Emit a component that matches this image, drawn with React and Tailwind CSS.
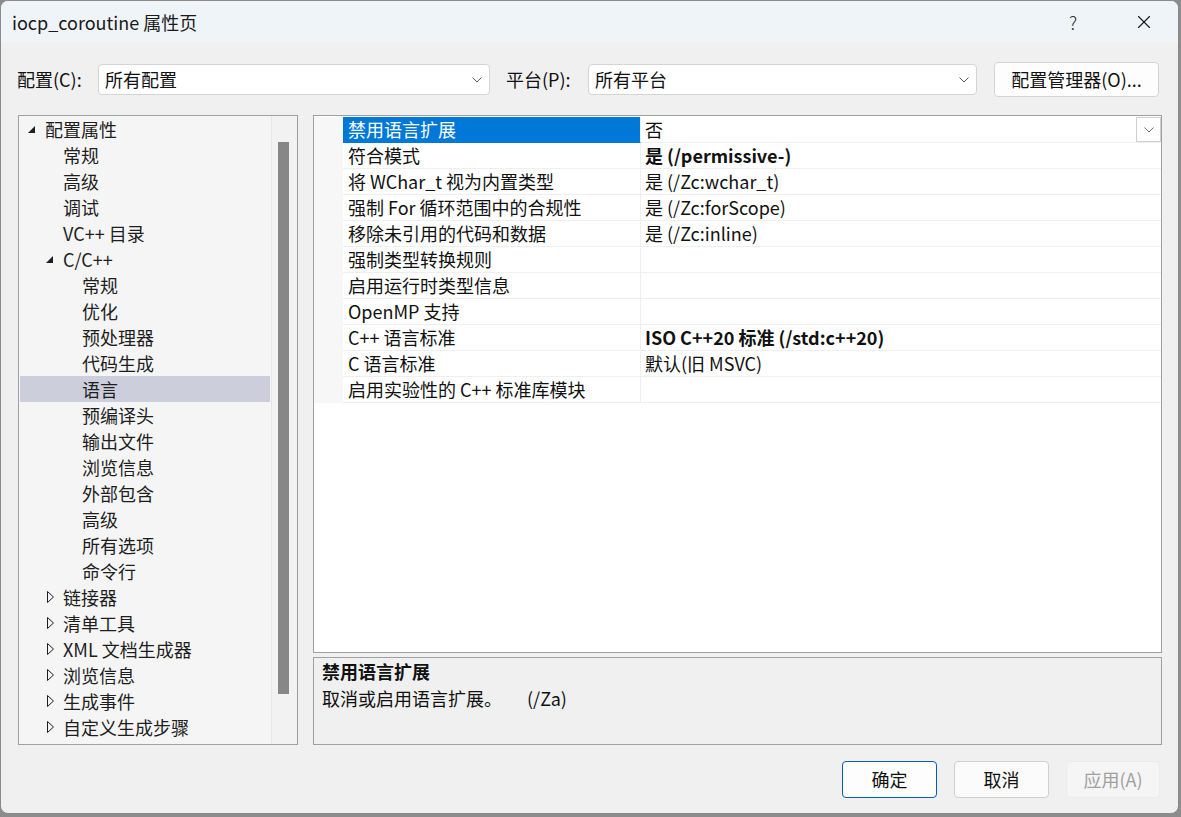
import { X } from 'lucide-react'

const tree = [
  { l: 0, t: '配置属性', e: 'open' },
  { l: 1, t: '常规' },
  { l: 1, t: '高级' },
  { l: 1, t: '调试' },
  { l: 1, t: 'VC++ 目录' },
  { l: 1, t: 'C/C++', e: 'open' },
  { l: 2, t: '常规' },
  { l: 2, t: '优化' },
  { l: 2, t: '预处理器' },
  { l: 2, t: '代码生成' },
  { l: 2, t: '语言', sel: true },
  { l: 2, t: '预编译头' },
  { l: 2, t: '输出文件' },
  { l: 2, t: '浏览信息' },
  { l: 2, t: '外部包含' },
  { l: 2, t: '高级' },
  { l: 2, t: '所有选项' },
  { l: 2, t: '命令行' },
  { l: 1, t: '链接器', e: 'closed' },
  { l: 1, t: '清单工具', e: 'closed' },
  { l: 1, t: 'XML 文档生成器', e: 'closed' },
  { l: 1, t: '浏览信息', e: 'closed' },
  { l: 1, t: '生成事件', e: 'closed' },
  { l: 1, t: '自定义生成步骤', e: 'closed' },
]

const indent = ['pl-[7px]', 'pl-[25px]', 'pl-[44px]']

const props = [
  { n: '禁用语言扩展', v: '否', sel: true },
  { n: '符合模式', v: '是 (/permissive-)', bold: true },
  { n: '将 WChar_t 视为内置类型', v: '是 (/Zc:wchar_t)' },
  { n: '强制 For 循环范围中的合规性', v: '是 (/Zc:forScope)' },
  { n: '移除未引用的代码和数据', v: '是 (/Zc:inline)' },
  { n: '强制类型转换规则', v: '' },
  { n: '启用运行时类型信息', v: '' },
  { n: 'OpenMP 支持', v: '' },
  { n: 'C++ 语言标准', v: 'ISO C++20 标准 (/std:c++20)', bold: true },
  { n: 'C 语言标准', v: '默认(旧 MSVC)' },
  { n: '启用实验性的 C++ 标准库模块', v: '' },
]

const Chevron = ({ color = '#606060' }) => (
  <svg width="10" height="6" viewBox="0 0 10 6">
    <polyline points="0.5,0.5 5,5 9.5,0.5" fill="none" stroke={color} strokeWidth="1" />
  </svg>
)

const Combo = ({ text, w }) => (
  <div className={`${w} h-[31px] flex items-center bg-white border border-[#d4d4d4] rounded-[4px] pl-[6px] pr-[7px]`}>
    <span className="flex-1">{text}</span>
    <Chevron />
  </div>
)

const TreeGlyph = ({ e }) => {
  if (e === 'open')
    return (
      <svg width="8" height="8" viewBox="0 0 8 8" className="ml-[1px] mt-[2px]">
        <polygon points="7,0 7,7 0,7" fill="#1e1e1e" />
      </svg>
    )
  if (e === 'closed')
    return (
      <svg width="8" height="12" viewBox="0 0 8 12" className="ml-[2px]">
        <polygon points="0.5,0.5 6.5,6 0.5,11.5" fill="none" stroke="#1e1e1e" strokeWidth="1" />
      </svg>
    )
  return null
}

export default function App() {
  return (
    <div className="w-[1181px] h-[817px] bg-[#8c8c8c] overflow-hidden font-['Noto_Sans_CJK_SC',sans-serif] text-[18px] text-[#111]">
      <div className="w-[1179px] h-[814px] rounded-[8px] border border-[#8a8a8a] bg-[#f0f0f0] flex flex-col overflow-hidden">
        {/* title bar */}
        <div className="h-[42px] bg-[#eff4f9] flex items-center pl-[11px] pr-[11px]">
          <span className="text-[18px] text-[#1a1a1a]">iocp_coroutine 属性页</span>
          <div className="ml-auto flex items-center gap-[25px]">
            <span className="w-[46px] text-center text-[18px] font-light text-[#333]">?</span>
            <span className="w-[46px] flex justify-center">
              <X size={22} strokeWidth={1.2} color="#1a1a1a" />
            </span>
          </div>
        </div>

        {/* config row */}
        <div className="mt-[19px] h-[35px] flex items-center pl-[16px]">
          <span className="w-[81px]">配置(C):</span>
          <Combo text="所有配置" w="w-[392px]" />
          <span className="w-[82px] ml-[16px]">平台(P):</span>
          <Combo text="所有平台" w="w-[389px]" />
          <button className="ml-[17px] w-[165px] h-[35px] bg-[#fdfdfd] border border-[#d4d4d4] rounded-[4px] text-[#111]">
            配置管理器(O)...
          </button>
        </div>

        {/* main */}
        <div className="mt-[18px] flex pl-[17px] gap-[15px]">
          {/* tree */}
          <div className="w-[280px] h-[630px] border border-[#a0a0a0] bg-[#f5f5f5] flex">
            <div className="flex-1">
              {tree.map((it, i) => (
                <div
                  key={i}
                  className={`h-[26px] leading-[26px] flex items-center mx-[1px] text-[#1e1e1e] ${indent[it.l]} ${it.sel ? 'bg-[#cccedb]' : ''}`}
                >
                  <span className="w-[18px] flex items-center">
                    <TreeGlyph e={it.e} />
                  </span>
                  <span className="whitespace-nowrap">{it.t}</span>
                </div>
              ))}
            </div>
            <div className="w-[26px] border-l border-[#e6e6e6] bg-[#f2f2f2] pt-[26px] pl-[6px]">
              <div className="w-[11px] h-[552px] bg-[#878787]" />
            </div>
          </div>

          {/* right side */}
          <div className="w-[849px] flex flex-col gap-[4px]">
            <div className="h-[538px] border border-[#a0a0a0] bg-white pt-[1px]">
              {props.map((p, i) => (
                <div key={i} className="h-[26px] flex">
                  <div className="w-[29px] bg-[#f7f7f7]" />
                  <div
                    className={`w-[298px] pl-[5px] leading-[25px] border-b border-r border-[#efefef] whitespace-nowrap ${p.sel ? 'bg-[#0078d7] text-white border-b-[#0078d7]' : ''}`}
                  >
                    {p.n}
                  </div>
                  <div className={`flex-1 flex items-center pl-[4px] border-b border-[#efefef] whitespace-nowrap ${p.bold ? 'font-bold' : ''}`}>
                    <span className="flex-1 leading-[25px]">{p.v}</span>
                    {p.sel && (
                      <span className="w-[25px] h-[25px] flex items-center justify-center border border-[#cfcfcf] bg-white">
                        <Chevron color="#707070" />
                      </span>
                    )}
                  </div>
                </div>
              ))}
            </div>
            <div className="h-[88px] border border-[#a0a0a0] bg-[#f0f0f0] pl-[8px] leading-[27px]">
              <div className="font-bold">禁用语言扩展</div>
              <div>
                取消或启用语言扩展。<span className="ml-[25px]">(/Za)</span>
              </div>
            </div>
          </div>
        </div>

        {/* buttons */}
        <div className="mt-[16px] flex justify-end gap-[17px] pr-[18px]">
          <button className="w-[95px] h-[37px] rounded-[4px] bg-[#fdfdfd] border border-[#005fb8] text-[#111]">
            确定
          </button>
          <button className="w-[95px] h-[37px] rounded-[4px] bg-[#fbfbfb] border border-[#d0d0d0] text-[#111]">
            取消
          </button>
          <button className="w-[94px] h-[37px] rounded-[4px] bg-[#f5f5f5] border border-[#ebebeb] text-[#a0a0a0]">
            应用(A)
          </button>
        </div>
      </div>
    </div>
  )
}
